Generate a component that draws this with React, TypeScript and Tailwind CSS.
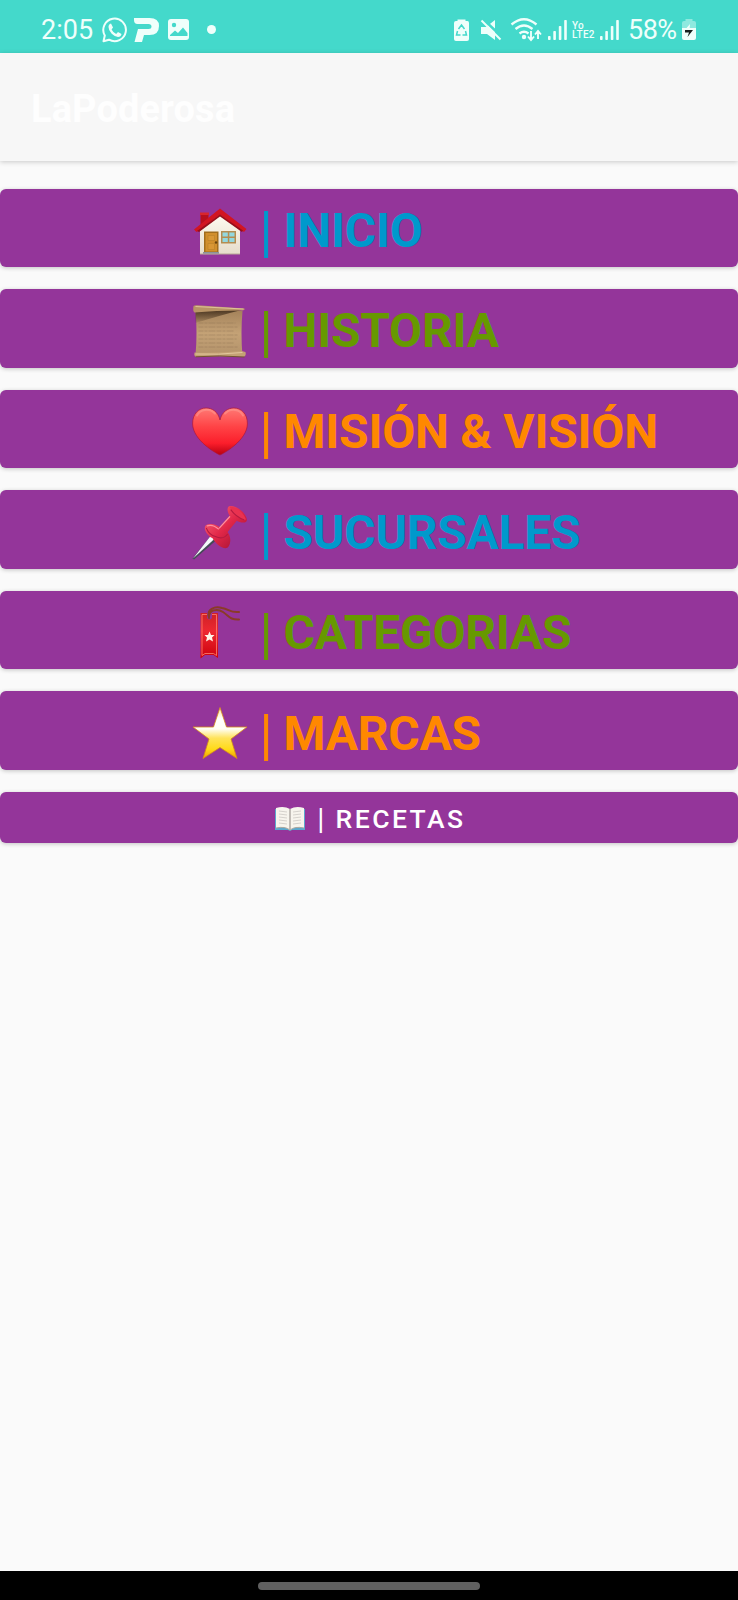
import type { ReactNode } from "react";

function House() {
  return (
    <svg width="56" height="56" viewBox="0 -4.5 56 56">
      <defs>
        <linearGradient id="wall" x1="0" y1="0" x2="0" y2="1">
          <stop offset="0" stopColor="#fffdf2" />
          <stop offset="1" stopColor="#e6dccb" />
        </linearGradient>
      </defs>
      <path d="M8.500 7H16.500V17L8.500 22Z" fill="#b80f1e" />
      <rect x="8" y="6" width="9" height="2.500" fill="#d8262d" />
      <path d="M8 24L28 6L48 24V47.500H8Z" fill="url(#wall)" />
      <path d="M28 2L54.500 22.500L52 25.500L28 8.500L4.500 25.500L2 23Z" fill="#d21522" />
      <path d="M28 8L51 24L50 25.500L28 10L7 25.500L5 24.500Z" fill="#960e1a" />
      <rect x="12" y="25" width="14.500" height="21" fill="#a16d1c" />
      <rect x="13.500" y="26.500" width="11.500" height="18.500" fill="#d18f2c" />
      <path d="M16 29H22.500V34H16ZM16 37H22.500V43H16Z" fill="#d99734" stroke="#b9812a" strokeWidth=".6" />
      <circle cx="24" cy="36" r="1.200" fill="#69430c" />
      <rect x="11" y="45.500" width="16" height="2.200" fill="#8b919b" />
      <rect x="29" y="24.500" width="15" height="12.500" fill="#b58d51" />
      <path d="M30.500 26H35.800V30H30.500ZM37.300 26H42.500V30H37.300ZM30.500 31.500H35.800V35.500H30.500ZM37.300 31.500H42.500V35.500H37.300Z" fill="#92d8df" />
      <path d="M8 47.500H48" stroke="#b9a997" />
    </svg>
  );
}

function Scroll() {
  return (
    <svg width="56" height="56" viewBox="0.5 -2 56 56">
      <defs>
        <linearGradient id="paper" x1="0" y1="0" x2="0" y2="1">
          <stop offset="0" stopColor="#a5835b" />
          <stop offset=".5" stopColor="#c4a276" />
          <stop offset="1" stopColor="#b3926a" />
        </linearGradient>
        <linearGradient id="fold" x1="0" y1="0" x2="0" y2="1">
          <stop offset="0" stopColor="#4c3722" />
          <stop offset="1" stopColor="#4c3722" stopOpacity="0.1" />
        </linearGradient>
      </defs>
      <path d="M4 6Q6 28 4 50L51 51Q49 28 51 6Z" fill="url(#paper)" />
      <path d="M4 5L50 5Q30 10 4 18Z" fill="url(#fold)" />
      <path d="M2 1Q3 0 6 .3L53 3.500Q54 5.500 49 5.500Q24 5.500 3 7.500Q1 6 2 1Z" fill="#b99466" />
      <path d="M4 1.500L52 4" stroke="#dfc298" strokeWidth="1.200" />
      <g stroke="#84684c" strokeWidth=".8" strokeDasharray="5 1 3 1 7 1" opacity=".4">
        <path d="M7 18H44M7 22H46M7 26H42M7 30H46M7 34H45M7 38H43M7 42H46" />
      </g>
      <path d="M3 47.500Q25 48.500 50 46L54 47Q55 51 52 52Q27 50.500 4 52Q2 50 3 47.500Z" fill="#c4a174" />
      <path d="M4 49Q27 50 51 47.500" stroke="#e2c79d" strokeWidth="1" fill="none" />
      <path d="M4 51.800Q28 50 53 52" stroke="#725233" fill="none" />
    </svg>
  );
}

function Heart() {
  return (
    <svg width="56" height="56" viewBox="0 -0.5 56 56">
      <defs>
        <linearGradient id="heart" x1="0" y1="0" x2="0" y2="1">
          <stop offset="0" stopColor="#ff7974" />
          <stop offset=".4" stopColor="#ff4346" />
          <stop offset=".75" stopColor="#fb1e2b" />
          <stop offset="1" stopColor="#b70012" />
        </linearGradient>
      </defs>
      <path d="M28 51.500C24.500 50 1 37 .6 20.500C.4 10 7 4.500 14 4.500C20 4.500 26 8 28 16.500C30 8 36 4.500 42 4.500C49 4.500 55.600 10 55.400 20.500C55 37 31.500 50 28 51.500Z" fill="url(#heart)" stroke="#ad1938" strokeWidth=".7" />
      <path d="M5 12C8 6 17 4 23 10M33 10C39 4 48 6 51 12" fill="none" stroke="#ffa39b" strokeWidth="2" strokeLinecap="round" opacity=".45" />
    </svg>
  );
}

function Pin() {
  return (
    <svg width="56" height="56" viewBox="1 0 55 54">
      <defs>
        <linearGradient id="pin" x1="0" y1="0" x2="1" y2="1">
          <stop offset="0" stopColor="#ff6f82" />
          <stop offset=".5" stopColor="#e12748" />
          <stop offset="1" stopColor="#960d2f" />
        </linearGradient>
      </defs>
      <path d="M1.500 53L20 30L26 34L3 54Z" fill="#454a57" />
      <path d="M2 53L20 30L24 33Z" fill="#f5f8fa" />
      <path d="M37 2C42-.500 54 7 55 15C55 19 48 18 45 16L36 27C41 34 38 43 34 43C29 43 24 38 21 33C17 31 12 25 14 21C17 17 26 20 28 22L38 11C36 8 35 4 37 2Z" fill="url(#pin)" />
      <path d="M38 2C44 2 52 8 54 15C48 15 41 10 38 2Z" fill="#e93250" />
      <path d="M39 5Q44 12 52 15M15 23Q18 30 24 31.500Q32 35 36 29" fill="none" stroke="#b51a40" strokeWidth="1" />
      <path d="M38 12L28 23M16 21Q21 19 27 24" fill="none" stroke="#ff8f9d" strokeWidth="1.200" strokeLinecap="round" />
    </svg>
  );
}

function Bookmark() {
  return (
    <svg width="56" height="56" viewBox="1 0 56 56">
      <defs>
        <linearGradient id="mark" x1="0" y1="0" x2="0" y2="1">
          <stop offset="0" stopColor="#cf2026" />
          <stop offset=".4" stopColor="#ed2831" />
          <stop offset="1" stopColor="#cd000c" />
        </linearGradient>
      </defs>
      <path d="M9.500 8H27V53L22.500 50H14L9.500 53.500Z" fill="url(#mark)" />
      <path d="M11 50.500V9.500H25.500V50.500L22.500 48.500H14Z" fill="none" stroke="#ff8170" strokeWidth=".8" />
      <path d="M16 7H21V13Q18.500 16 16 13Z" fill="#94359a" />
      <path d="M18 13C15 4 24 1 31 3C38 4 39 8 48 7M18 12C18 5 26 3 32 7C38 11 39 15 48 14.500" fill="none" stroke="#8a3b27" strokeWidth="2" strokeLinecap="round" />
      <path d="M18.500 26.500L20 30H23.500L21 32.500L22 36.500L18.500 34.500L15 36.500L16 32.500L13.500 30H17Z" fill="#fff5e7" />
    </svg>
  );
}

function Star() {
  return (
    <svg width="56" height="56" viewBox="0 -1 56 56">
      <defs>
        <linearGradient id="star" x1="0" y1="0" x2="0" y2="1">
          <stop offset="0" stopColor="#ffe99b" />
          <stop offset=".22" stopColor="#ffffff" />
          <stop offset=".42" stopColor="#fffef4" />
          <stop offset=".6" stopColor="#ffe35a" />
          <stop offset=".82" stopColor="#ffda17" />
          <stop offset="1" stopColor="#efa200" />
        </linearGradient>
      </defs>
      <path d="M28 1.500L34.500 21H55L39 33L45 52.500L28 41.500L11 52.500L17 33L1 21H21.500Z" fill="url(#star)" stroke="#d68b18" strokeWidth=".8" strokeLinejoin="round" />
    </svg>
  );
}

function Book() {
  return (
    <svg className="mt-[3px]" width="32" height="26" viewBox="0 0 32 26">
      <path d="M1 3H31V24H18L16 25L14 24H1Z" fill="#5ba7cd" />
      <path d="M2 2Q10-.500 16 3Q22-.500 30 2V22Q21 20 16 24Q11 20 2 22Z" fill="#f7f4ed" />
      <path d="M16 3V23" stroke="#afaaa3" strokeWidth="1.500" />
      <path d="M2 22Q11 20 16 24Q21 20 30 22" fill="none" stroke="#a9a8a1" />
      <g stroke="#c5c2bd" strokeWidth=".7">
        <path d="M5 5L13 6M5 8L13 9M5 11L13 12M5 14L13 15M5 17L13 18M19 6L27 5M19 9L27 8M19 12L27 11M19 15L27 14M19 18L27 17" />
      </g>
    </svg>
  );
}

const items: { label: string; icon: ReactNode; color: string }[] = [
  { label: "INICIO", icon: <House />, color: "text-[#0099cc]" },
  { label: "HISTORIA", icon: <Scroll />, color: "text-[#669900]" },
  { label: "MISIÓN & VISIÓN", icon: <Heart />, color: "text-[#ff8800]" },
  { label: "SUCURSALES", icon: <Pin />, color: "text-[#0099cc]" },
  { label: "CATEGORIAS", icon: <Bookmark />, color: "text-[#669900]" },
  { label: "MARCAS", icon: <Star />, color: "text-[#ff8800]" },
];

function Signal({ className }: { className: string }) {
  return (
    <svg className={className} width="20" height="22" viewBox="0 0 20 22" fill="#effffb">
      <rect x="0" y="17" width="2.600" height="4" rx=".8" />
      <rect x="5.300" y="12" width="2.600" height="9" rx=".8" />
      <rect x="10.800" y="7" width="2.600" height="14" rx=".8" />
      <rect x="16.200" y="1" width="2.600" height="20" rx=".8" />
    </svg>
  );
}

function StatusBar() {
  return (
    <header className="flex h-[53px] shrink-0 items-center bg-[#44d9cb] pt-[7px] pl-[41px] text-[#effffb]">
      <span className="w-[52px] text-[27px] leading-none whitespace-nowrap">2:05</span>
      <svg className="ml-[8.500px]" width="26" height="26" viewBox="0 0 26 26" fill="none">
        <path d="M2.800 18.500A11.300 11.300 0 1 1 7 22.700L1.500 24.300Z" stroke="#effffb" strokeWidth="2" strokeLinejoin="round" />
        <path d="M9 6.500L11 10.500L9.600 12.500Q11 15.500 14.200 17L16 15L19.500 17Q19 20 16 20Q13 20 9.700 16.800Q6.500 13.500 6.500 10Q6.500 7 9 6.500Z" fill="#effffb" />
      </svg>
      <svg className="ml-[5.500px]" width="28" height="26" viewBox="0 0 28 26">
        <path d="M1 1H16.500Q26 1 26 9Q26 18 16.500 18H11L9 25H1.500L5 12H15.500Q18.500 12 18.500 9.500Q18.500 7 15.500 7H4.500Q1 7 1 3Z" fill="#effffb" />
      </svg>
      <svg className="-mt-px ml-[6px]" width="23" height="23" viewBox="0 0 23 23">
        <rect x="1" y="1" width="21" height="21" rx="3" fill="#effffb" />
        <circle cx="7" cy="7" r="2.200" fill="#44d9cb" />
        <path d="M3 17L8 12.500L11 15L16 9.500L20.500 15V18H3Z" fill="#44d9cb" />
      </svg>
      <span className="-mt-px ml-[17px] h-[9px] w-[9px] rounded-full bg-[#effffb]" />

      <svg className="ml-[237px]" width="17" height="24" viewBox="0 0 17 24">
        <path d="M4.500 3V1.500H12.500V3H14.500Q16 3 16 5V21Q16 23 14 23H3Q1 23 1 21V5Q1 3 3 3Z" fill="#effffb" />
        <path d="M5.500 11L8.500 7L11.500 11M12.500 13L13.500 17H9.500M7.500 17H3.500L4.500 13" fill="none" stroke="#44d9cb" strokeWidth="1.500" />
      </svg>
      <svg className="ml-[9px]" width="24" height="24" viewBox="0 0 24 24">
        <path d="M2 9H7L16 2V22L8 16H2Z" fill="#effffb" />
        <path d="M4 1L23 19" stroke="#44d9cb" strokeWidth="2.500" />
        <path d="M2.500 2.500L21.500 21.500" stroke="#effffb" strokeWidth="2" />
      </svg>
      <svg className="ml-[7px]" width="32" height="26" viewBox="0 0 32 26" fill="none" stroke="#effffb">
        <path d="M1.500 7.500Q14-3 26.500 7.500M5.500 12Q14 5 22.500 12M9.500 16.500Q14 13 18.500 16.500" strokeWidth="2.300" />
        <circle cx="14" cy="20" r="2.200" fill="#effffb" stroke="none" />
        <path d="M21 14V22M18 19.500L21 23L24 19.500M28 22V15M25 17.500L28 14L31 17.500" strokeWidth="1.900" />
      </svg>
      <Signal className="ml-[6px]" />
      <span className="ml-[4px] flex w-[23px] flex-col text-[10px] leading-[9px] font-medium tracking-[0.3px]">
        <span>Yo</span>
        <span>LTE2</span>
      </span>
      <Signal className="ml-[5px]" />
      <span className="ml-[8px] w-[49px] text-[27px] leading-none tracking-[-0.5px] whitespace-nowrap">58%</span>
      <svg className="-mt-px ml-[4px]" width="16" height="23" viewBox="0 0 16 23">
        <path d="M4.500 3V1H11.500V3H13Q15 3 15 5V10H1V5Q1 3 3 3Z" fill="#8ee9df" />
        <path d="M1 10H15V20Q15 22 13 22H3Q1 22 1 20Z" fill="#effffb" />
        <path d="M9 6L3 13H7.500L13 12H8.500Z" fill="#effffb" />
        <path d="M4 12H12L6.500 19L8 14.500H4Z" fill="#17201f" />
      </svg>
    </header>
  );
}

export default function App() {
  return (
    <div className="flex h-[1600px] w-[738px] flex-col overflow-hidden bg-[#fafafa] font-['Roboto','Liberation_Sans',sans-serif]">
      <StatusBar />
      <div className="flex h-[108px] shrink-0 items-center bg-[#f7f7f7] pt-[4px] pl-[31px] shadow-[0_1px_5px_rgba(0,0,0,0.2)]">
        <h1 className="text-[38px] leading-none font-bold tracking-[0.1px] whitespace-nowrap text-[#fefefe]">LaPoderosa</h1>
      </div>
      <main className="flex flex-1 flex-col gap-[22px] pt-[27.500px]">
        {items.map(({ label, icon, color }) => (
          <button
            key={label}
            className="flex h-[78.600px] w-full shrink-0 items-center rounded-[6px] bg-[#94359a] pl-[192px] shadow-[0_1px_4px_rgba(0,0,0,0.22)]"
          >
            <span className="mt-[5px]">{icon}</span>
            <span className={`${color} mt-[6px] ml-[12px] text-[48px] leading-[56px] font-bold tracking-[-0.25px] whitespace-pre`}>
              <span className="inline-block origin-top translate-y-[-3px] scale-y-[1.16]">|</span> {label}
            </span>
          </button>
        ))}
        <button className="flex h-[51px] w-full shrink-0 items-center rounded-[6px] bg-[#94359a] pl-[274px] text-white shadow-[0_1px_4px_rgba(0,0,0,0.22)]">
          <Book />
          <span className="mt-[3px] ml-[11.500px] text-[26.500px] leading-none font-medium tracking-[2.450px] whitespace-pre">
            <span className="inline-block scale-y-[1.14]">|</span> RECETAS
          </span>
        </button>
      </main>
      <footer className="flex h-[29px] shrink-0 items-center justify-center bg-black">
        <span className="h-[8px] w-[222px] rounded-full bg-[#606060]" />
      </footer>
    </div>
  );
}
